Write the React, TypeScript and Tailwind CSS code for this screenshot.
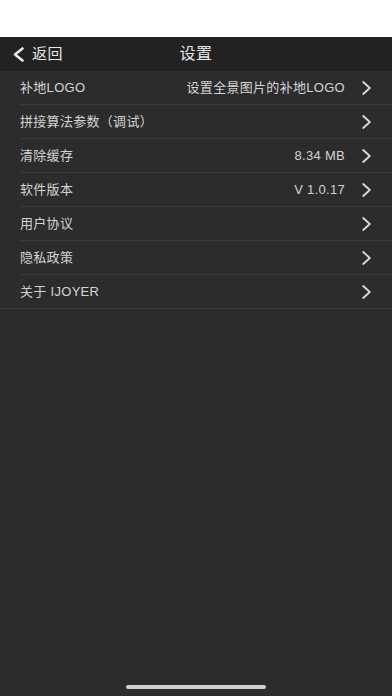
const rows = [
  { label: '补地LOGO', value: '设置全景图片的补地LOGO' },
  { label: '拼接算法参数（调试）', value: '' },
  { label: '清除缓存', value: '8.34 MB' },
  { label: '软件版本', value: 'V 1.0.17' },
  { label: '用户协议', value: '' },
  { label: '隐私政策', value: '' },
  { label: '关于 IJOYER', value: '' },
];

function Chevron({ left = false, className = '' }: { left?: boolean; className?: string }) {
  return (
    <svg
      width={left ? 11 : 9}
      height={left ? 15 : 14}
      viewBox={left ? '0 0 11 15' : '0 0 9 14'}
      fill="none"
      stroke="currentColor"
      strokeWidth={left ? 2.6 : 1.8}
      strokeLinecap="round"
      strokeLinejoin="round"
      className={className}
    >
      {left ? <polyline points="9.5,1.5 2,7.5 9.5,13.5" /> : <polyline points="1.2,1 7.8,7 1.2,13" />}
    </svg>
  );
}

export default function App() {
  return (
    <div
      className="w-[392px] h-[696px] flex flex-col bg-[#2c2c2c] overflow-hidden"
      style={{ fontFamily: '"Liberation Sans", "Noto Sans CJK SC", sans-serif' }}
    >
      {/* status bar */}
      <div className="h-[37px] bg-white shrink-0" />

      {/* nav */}
      <div className="h-[34px] bg-[#222222] flex items-center relative shrink-0">
        <div className="flex items-center pl-[13px] text-[#e8e8e8]">
          <Chevron left />
          <span className="text-[15px] ml-[8px] tracking-[0.5px]">返回</span>
        </div>
        <div className="absolute inset-0 flex items-center justify-center text-[16px] text-[#e8e8e8] tracking-[0.5px] pointer-events-none">
          设置
        </div>
      </div>

      {/* list */}
      <div className="flex flex-col">
        {rows.map((r, i) => (
          <div key={r.label} className="h-[34px] flex flex-col">
            <div className="flex-1 flex items-center pl-[20px] pr-[21px]">
              <span className="text-[13px] text-[#d4d4d4] flex-1 tracking-[0.3px]">{r.label}</span>
              {r.value && (
                <span className="text-[13px] text-[#d4d4d4] mr-[17px] tracking-[0.3px]">{r.value}</span>
              )}
              <Chevron className="text-[#dcdcdc]" />
            </div>
            <div className={`h-px bg-[#3a3a3a] ${i === rows.length - 1 ? '' : 'ml-[20px]'}`} />
          </div>
        ))}
      </div>

      <div className="flex-1" />
      <div className="flex justify-center pb-[7px]">
        <div className="w-[140px] h-[4px] rounded-full bg-[#d0d0d0]" />
      </div>
    </div>
  );
}
